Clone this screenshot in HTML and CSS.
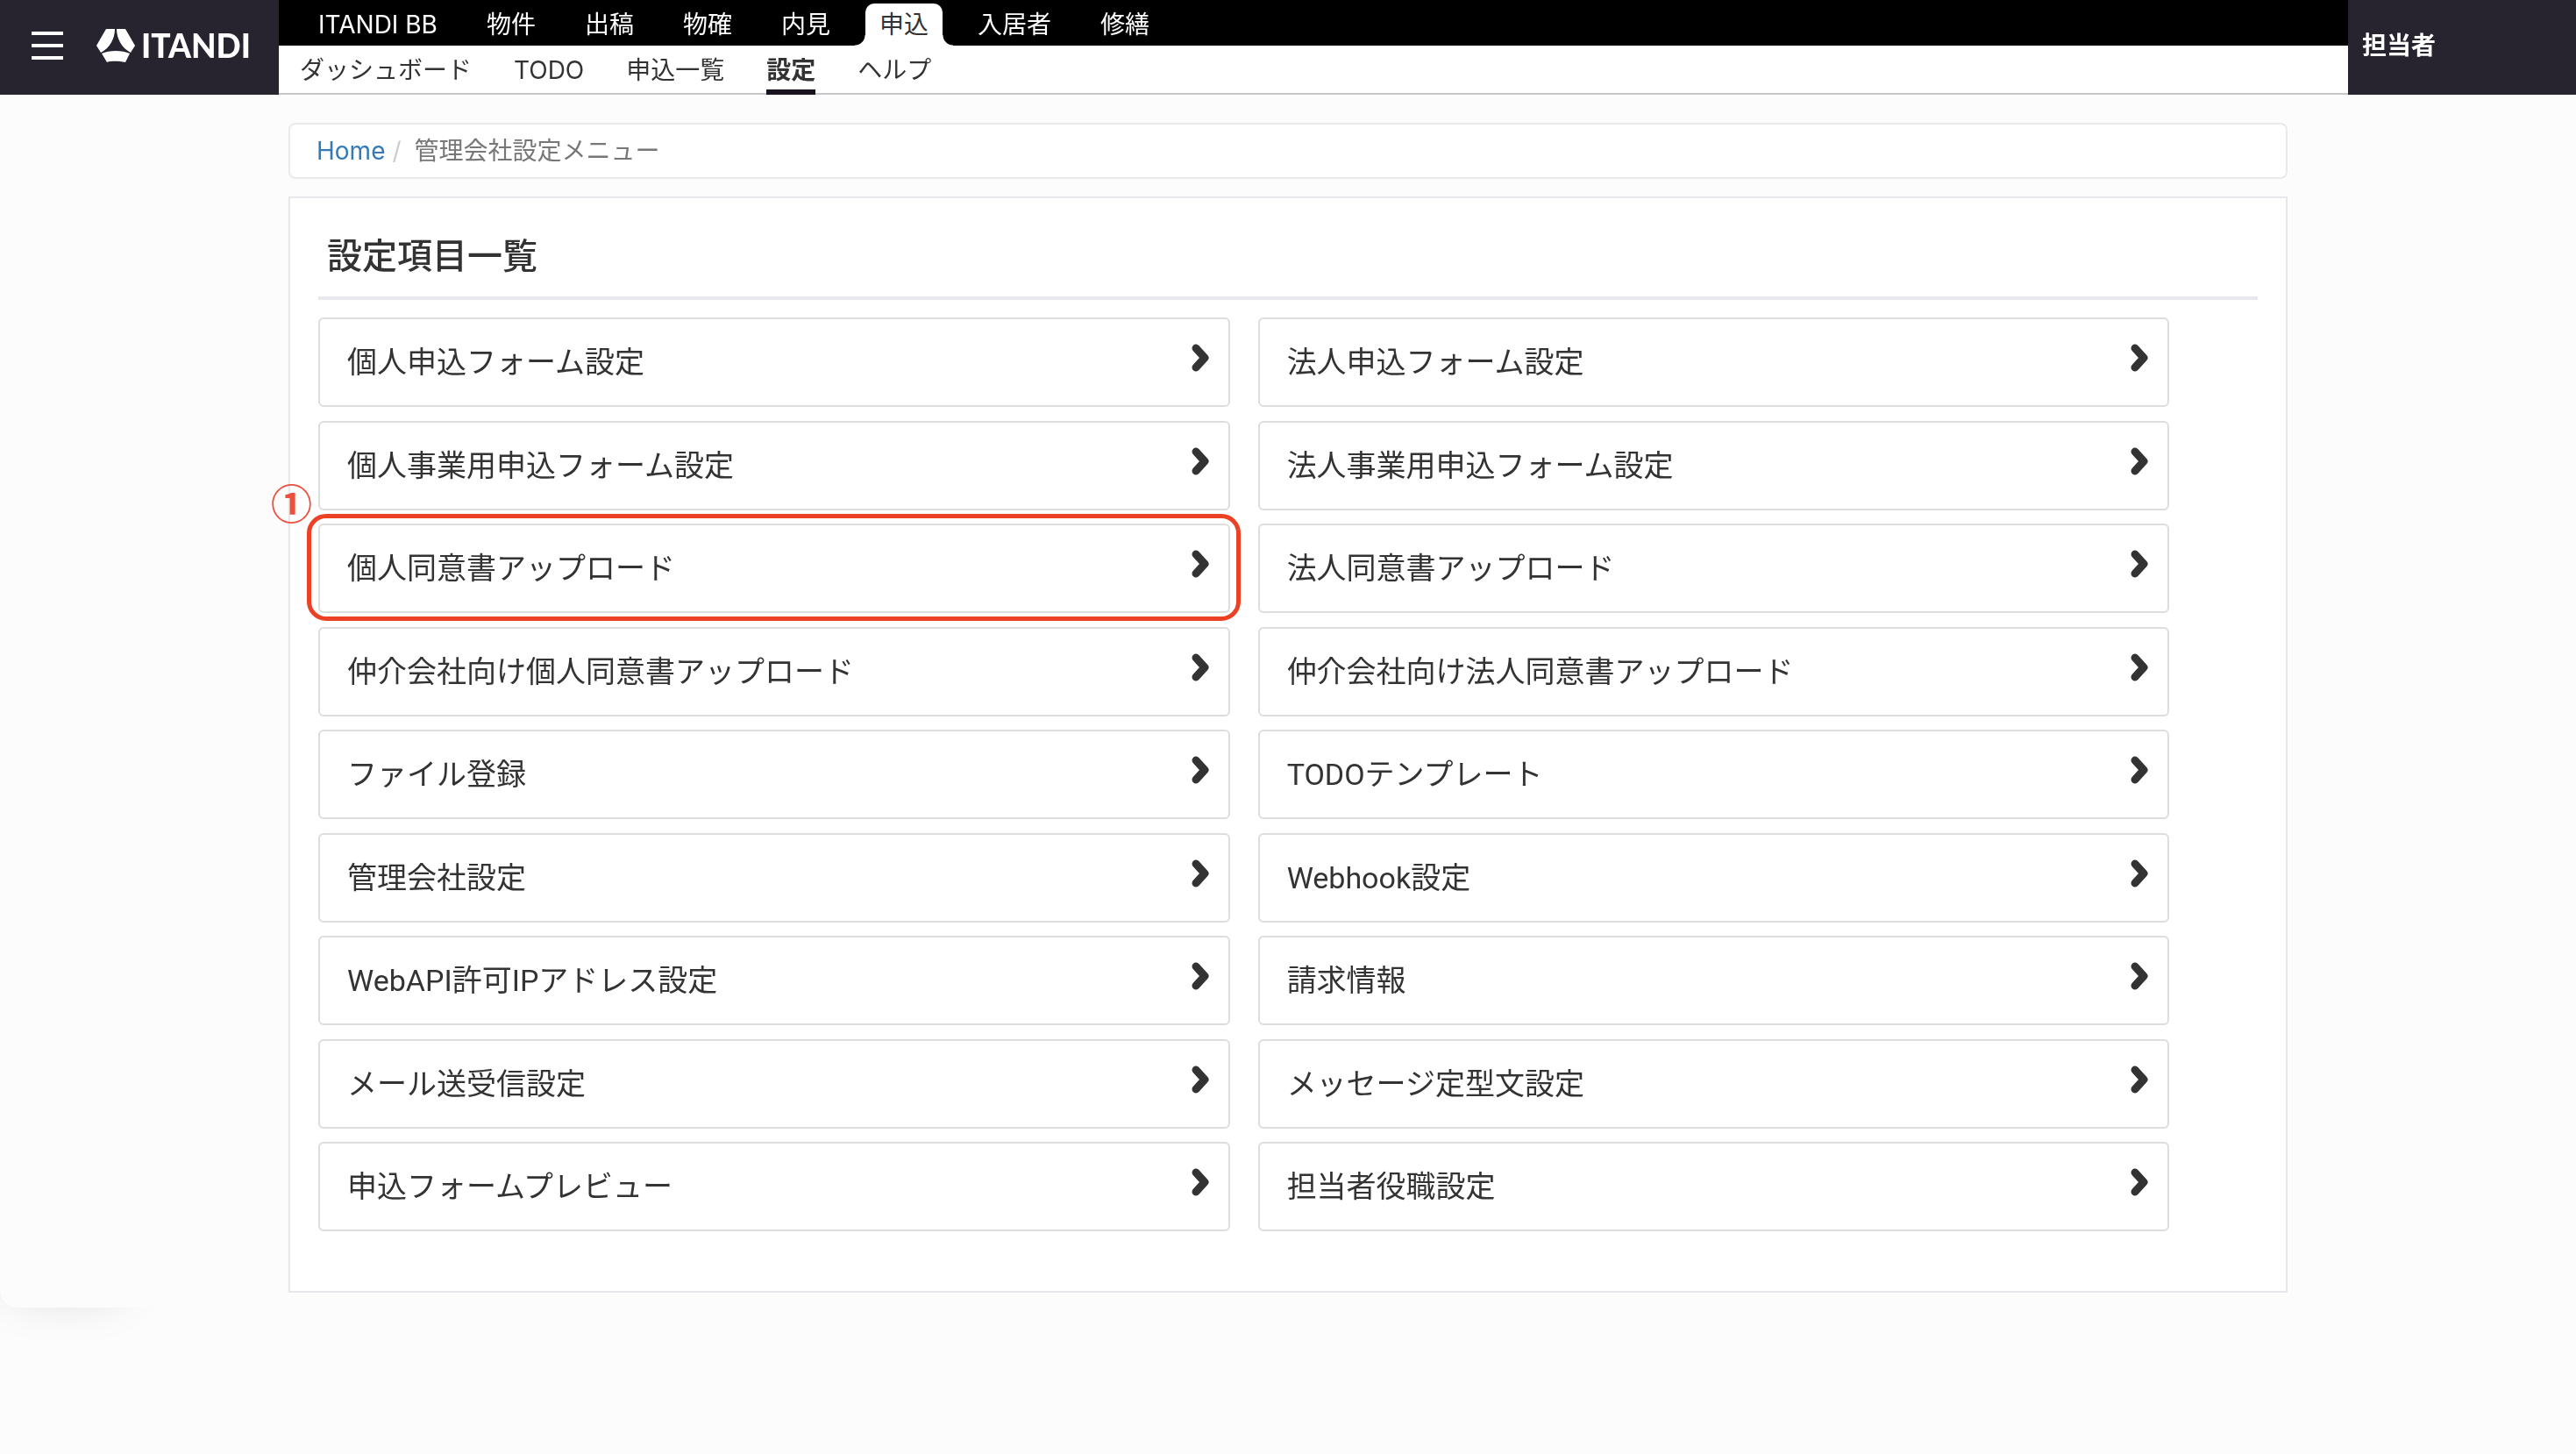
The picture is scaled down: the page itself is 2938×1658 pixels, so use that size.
FILE: index.html
```
<!DOCTYPE html>
<html lang="ja">
<head>
  <meta charset="UTF-8">
  <meta name="viewport" content="width=device-width, initial-scale=1.0">
  <title>管理会社設定メニュー</title>
  <link rel="stylesheet" href="styles.css">
</head>
<body>

  <!-- ヘッダー -->
  <header class="header">
    <div class="brand">
      <button class="menu-button" aria-label="メニュー">
        <span></span>
        <span></span>
        <span></span>
      </button>
      <a class="logo" href="#">
        <svg class="logo-mark" viewBox="0 0 44 38" aria-hidden="true">
          <path d="M11 0H21C21 11 15 22 5 27L0 19Z"/>
          <path d="M23 0H33L44 19L39 27C29 22 23 11 23 0Z"/>
          <path d="M6 28C15 24 29 24 38 28L33 38C26 37 18 36 12 38Z"/>
        </svg>
        <span class="logo-text">ITANDI</span>
      </a>
    </div>

    <div class="nav">
      <nav class="nav-main">
        <a href="#">ITANDI BB</a>
        <a href="#">物件</a>
        <a href="#">出稿</a>
        <a href="#">物確</a>
        <a href="#">内見</a>
        <a class="active" href="#">申込</a>
        <a href="#">入居者</a>
        <a href="#">修繕</a>
      </nav>
      <nav class="nav-sub">
        <a href="#">ダッシュボード</a>
        <a href="#">TODO</a>
        <a href="#">申込一覧</a>
        <a class="active" href="#">設定</a>
        <a href="#">ヘルプ</a>
      </nav>
    </div>

    <div class="user">担当者</div>
  </header>

  <main class="container">
    <!-- パンくず -->
    <nav class="breadcrumb">
      <a href="#">Home</a>
      <span class="separator">/</span>
      <span class="current">管理会社設定メニュー</span>
    </nav>

    <!-- 設定項目 -->
    <section class="panel">
      <h1>設定項目一覧</h1>
      <div class="menu-list">
        <a class="menu-item" href="#">個人申込フォーム設定<svg class="chevron" viewBox="0 0 20 32"><path d="M5 5L15 16L5 27"/></svg></a>
        <a class="menu-item" href="#">法人申込フォーム設定<svg class="chevron" viewBox="0 0 20 32"><path d="M5 5L15 16L5 27"/></svg></a>
        <a class="menu-item" href="#">個人事業用申込フォーム設定<svg class="chevron" viewBox="0 0 20 32"><path d="M5 5L15 16L5 27"/></svg></a>
        <a class="menu-item" href="#">法人事業用申込フォーム設定<svg class="chevron" viewBox="0 0 20 32"><path d="M5 5L15 16L5 27"/></svg></a>
        <a class="menu-item marked" href="#">個人同意書アップロード<svg class="chevron" viewBox="0 0 20 32"><path d="M5 5L15 16L5 27"/></svg><span class="mark-number">①</span></a>
        <a class="menu-item" href="#">法人同意書アップロード<svg class="chevron" viewBox="0 0 20 32"><path d="M5 5L15 16L5 27"/></svg></a>
        <a class="menu-item" href="#">仲介会社向け個人同意書アップロード<svg class="chevron" viewBox="0 0 20 32"><path d="M5 5L15 16L5 27"/></svg></a>
        <a class="menu-item" href="#">仲介会社向け法人同意書アップロード<svg class="chevron" viewBox="0 0 20 32"><path d="M5 5L15 16L5 27"/></svg></a>
        <a class="menu-item" href="#">ファイル登録<svg class="chevron" viewBox="0 0 20 32"><path d="M5 5L15 16L5 27"/></svg></a>
        <a class="menu-item" href="#">TODOテンプレート<svg class="chevron" viewBox="0 0 20 32"><path d="M5 5L15 16L5 27"/></svg></a>
        <a class="menu-item" href="#">管理会社設定<svg class="chevron" viewBox="0 0 20 32"><path d="M5 5L15 16L5 27"/></svg></a>
        <a class="menu-item" href="#">Webhook設定<svg class="chevron" viewBox="0 0 20 32"><path d="M5 5L15 16L5 27"/></svg></a>
        <a class="menu-item" href="#">WebAPI許可IPアドレス設定<svg class="chevron" viewBox="0 0 20 32"><path d="M5 5L15 16L5 27"/></svg></a>
        <a class="menu-item" href="#">請求情報<svg class="chevron" viewBox="0 0 20 32"><path d="M5 5L15 16L5 27"/></svg></a>
        <a class="menu-item" href="#">メール送受信設定<svg class="chevron" viewBox="0 0 20 32"><path d="M5 5L15 16L5 27"/></svg></a>
        <a class="menu-item" href="#">メッセージ定型文設定<svg class="chevron" viewBox="0 0 20 32"><path d="M5 5L15 16L5 27"/></svg></a>
        <a class="menu-item" href="#">申込フォームプレビュー<svg class="chevron" viewBox="0 0 20 32"><path d="M5 5L15 16L5 27"/></svg></a>
        <a class="menu-item" href="#">担当者役職設定<svg class="chevron" viewBox="0 0 20 32"><path d="M5 5L15 16L5 27"/></svg></a>
      </div>
    </section>
  </main>

  <!-- 左下のポップアップ -->
  <div class="popup"></div>

</body>
</html>
```
FILE: styles.css
```
* {
  box-sizing: border-box;
}

body {
  margin: 0;
  background-color: #fcfcfc;
  color: #333;
  font-family: Inter, 'Noto Sans CJK JP', sans-serif;
  font-size: 28px;
  line-height: 40px;
}

a {
  color: inherit;
  text-decoration: none;
}

/* ヘッダー */
.header {
  display: flex;
  height: 108px;
}

.brand {
  display: flex;
  align-items: center;
  gap: 38px;
  width: 318px;
  padding-left: 36px;
  padding-bottom: 4px;
  background-color: #28242f;
}

.menu-button {
  display: flex;
  flex-direction: column;
  gap: 10px;
  width: 36px;
  padding: 0;
  border: none;
  background: none;
  cursor: pointer;
}

.menu-button span {
  height: 4px;
  background-color: #fff;
}

.logo {
  display: flex;
  align-items: center;
  gap: 7px;
  color: #fff;
}

.logo-mark {
  width: 44px;
  height: 38px;
  fill: #fff;
}

.logo-text {
  font-family: Lato, sans-serif;
  font-size: 37px;
  font-weight: 900;
}

.nav {
  flex: 1;
  display: flex;
  flex-direction: column;
  background-color: #fff;
}

.nav-main {
  display: flex;
  align-items: flex-end;
  height: 52px;
  padding-left: 17px;
  background-color: #000;
  color: #fff;
}

.nav-main a {
  height: 48px;
  padding: 0 28px;
  line-height: 48px;
}

.nav-main .active {
  position: relative;
  margin: 0 12px;
  padding: 0 16px;
  border-radius: 10px 10px 0 0;
  background-color: #fff;
  color: #333;
}

/* タブの裾の丸み */
.nav-main .active::before,
.nav-main .active::after {
  content: '';
  position: absolute;
  bottom: 0;
  width: 12px;
  height: 12px;
}

.nav-main .active::before {
  right: 100%;
  background: radial-gradient(circle at 0 0, #000 11px, #fff 12px);
}

.nav-main .active::after {
  left: 100%;
  background: radial-gradient(circle at 100% 0, #000 11px, #fff 12px);
}

.nav-sub {
  display: flex;
  gap: 48px;
  height: 56px;
  padding-left: 24px;
  border-bottom: 2px solid #c7c6cb;
}

.nav-sub a {
  height: 56px;
  line-height: 56px;
}

.nav-sub .active {
  border-bottom: 6px solid #19131f;
  font-weight: bold;
}

.user {
  width: 260px;
  padding-left: 16px;
  background-color: #28242f;
  color: #fff;
  font-weight: bold;
  line-height: 104px;
}

/* コンテンツ */
.container {
  max-width: 2280px;
  margin: 32px auto 0;
}

.breadcrumb {
  display: flex;
  align-items: center;
  height: 64px;
  padding: 0 30px;
  border: 2px solid #e9e9ee;
  border-radius: 8px;
  background-color: #fff;
}

.breadcrumb a {
  color: #337ab7;
}

.breadcrumb .separator {
  padding: 0 15px 0 8px;
  color: #ccc;
}

.breadcrumb .current {
  color: #777;
}

.panel {
  margin-top: 20px;
  padding: 32px 32px 68px;
  border: 2px solid #e7e7ec;
  background-color: #fff;
  box-shadow: 0 2px 2px rgba(0, 0, 0, 0.05);
}

.panel h1 {
  margin: 0 0 20px;
  padding: 6px 10px 18px;
  border-bottom: 4px solid #e7e7ec;
  font-size: 40px;
  font-weight: 500;
  line-height: 56px;
}

.menu-list {
  display: grid;
  grid-template-columns: 47% 47%;
  column-gap: 32px;
  align-content: space-between;
  min-height: 1042px;
}

.menu-item {
  position: relative;
  display: flex;
  justify-content: space-between;
  align-items: center;
  height: 102px;
  padding: 0 22px 0 31px;
  border: 2px solid #ddd;
  border-radius: 6px;
  font-family: Roboto, 'Noto Sans CJK JP', sans-serif;
  font-size: 34px;
}

.chevron {
  width: 20px;
  height: 32px;
  margin-bottom: 10px;
  fill: none;
  stroke: #333;
  stroke-width: 9;
  stroke-linecap: round;
  stroke-linejoin: round;
}

/* 赤枠と番号 */
.marked::before {
  content: '';
  position: absolute;
  inset: -13px -14px -11px -15px;
  border: 5px solid #ed4125;
  border-radius: 22px;
}

.mark-number {
  position: absolute;
  left: -56px;
  top: -51px;
  color: #ee4f3c;
  font-family: 'Noto Sans CJK JP', sans-serif;
  font-size: 47px;
  font-weight: bold;
  line-height: 48px;
}

/* 左下のポップアップ */
.popup {
  position: fixed;
  left: 0;
  bottom: 167px;
  width: 200px;
  height: 164px;
  border-radius: 20px;
  background-color: #fcfcfc;
  box-shadow: -25px 20px 60px -40px rgba(0, 0, 0, 0.2);
  z-index: -1;
}
```
